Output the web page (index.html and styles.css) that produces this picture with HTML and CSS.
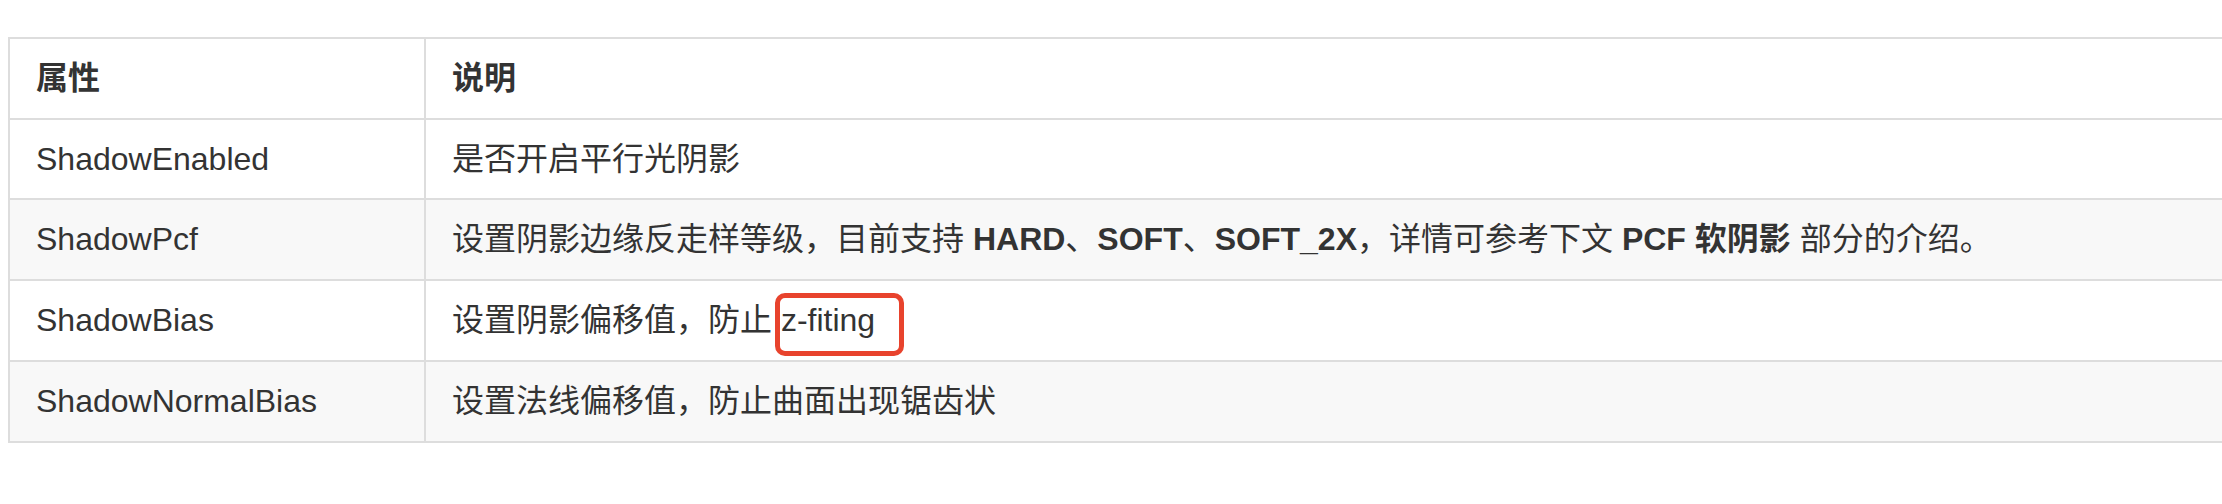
FILE: index.html
```html
<!DOCTYPE html>
<html lang="zh-CN">
<head>
  <meta charset="UTF-8" />
  <meta name="viewport" content="width=device-width, initial-scale=1" />
  <title>平行光阴影属性</title>
  <link rel="stylesheet" href="styles.css">
</head>
<body>
  <div class="page">
    <table class="props">
      <thead>
        <tr>
          <th class="col-name">属性</th>
          <th>说明</th>
        </tr>
      </thead>
      <tbody>
        <tr>
          <td>ShadowEnabled</td>
          <td>是否开启平行光阴影</td>
        </tr>
        <tr>
          <td>ShadowPcf</td>
          <td>设置阴影边缘反走样等级，目前支持 <strong>HARD</strong>、<strong>SOFT</strong>、<strong>SOFT_2X</strong>，详情可参考下文 <strong>PCF 软阴影</strong> 部分的介绍。</td>
        </tr>
        <tr>
          <td>ShadowBias</td>
          <td>设置阴影偏移值，防止 <span class="mark">z-fiting</span></td>
        </tr>
        <tr>
          <td>ShadowNormalBias</td>
          <td>设置法线偏移值，防止曲面出现锯齿状</td>
        </tr>
      </tbody>
    </table>
  </div>
</body>
</html>
```

FILE: styles.css
```css
* {
  box-sizing: border-box;
}

html,
body {
  overflow: hidden;
}

body {
  margin: 0;
  background: #ffffff;
  color: #333333;
  font-family: "Liberation Sans", "Noto Sans CJK SC", sans-serif;
  font-size: 32px;
}

.page {
  padding: 37px 0 0 8px;
  width: 2260px;
}

.props {
  width: 100%;
  border-collapse: collapse;
  border: 2px solid #dddddd;
}

.props th,
.props td {
  border: 2px solid #dddddd;
  padding: 15px 26px;
  line-height: 48.7px;
  text-align: left;
  vertical-align: middle;
  white-space: nowrap;
}

.props th {
  font-weight: bold;
}

.props .col-name {
  width: 416px;
}

.props tbody tr:nth-child(even) {
  background: #f8f8f8;
}

.props strong {
  font-weight: bold;
}

/* annotation box drawn over the text */
.mark {
  position: relative;
}

.mark::after {
  content: "";
  position: absolute;
  left: -6px;
  right: -29px;
  top: -9px;
  bottom: -18px;
  border: 5px solid #e8432d;
  border-radius: 10px;
}
```
